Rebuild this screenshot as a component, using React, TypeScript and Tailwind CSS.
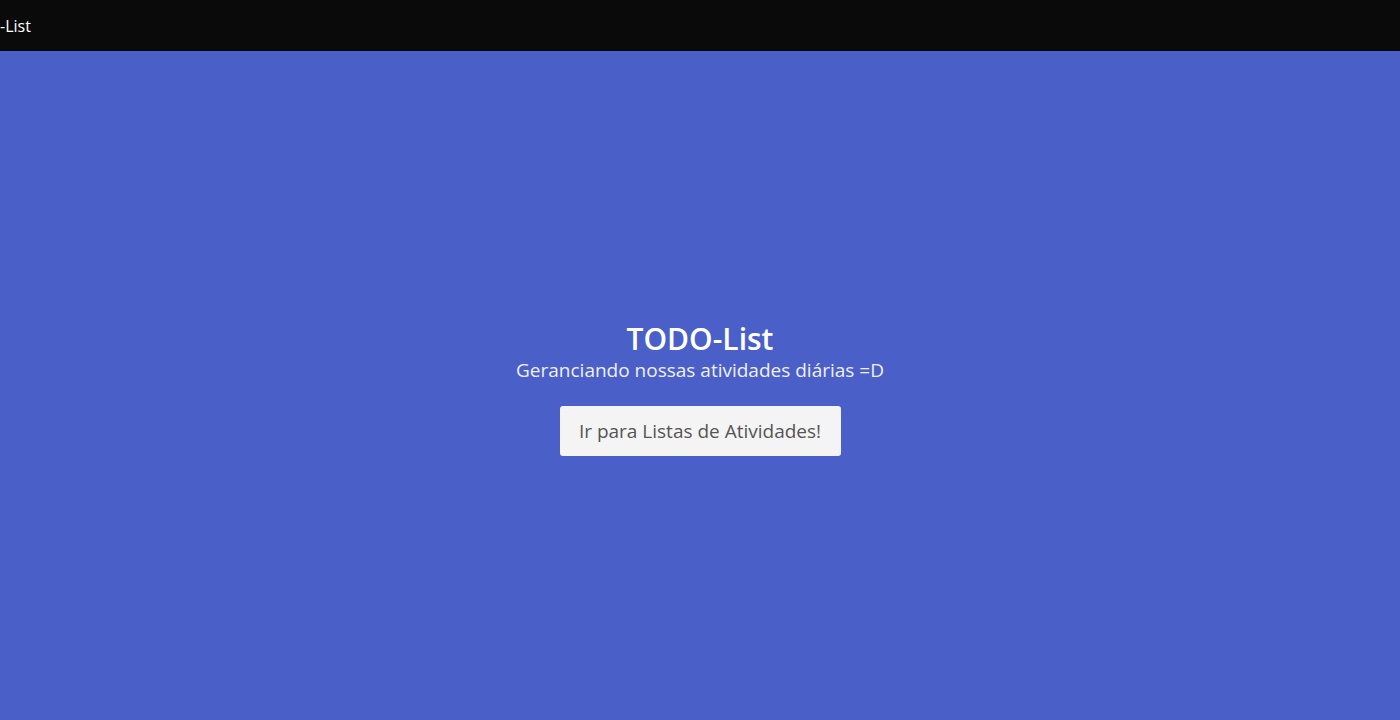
export default function App() {
  return (
    <div className="flex h-[720px] w-full flex-col bg-[#4a5fc8] font-['Open_Sans',sans-serif]">
      <nav className="flex h-[51px] shrink-0 items-center bg-[#0a0a0a]">
        <span className="text-[16px] text-white">-List</span>
      </nav>
      <main className="flex flex-1 flex-col items-center justify-center pt-[6px] text-white">
        <h1 className="text-[30px] font-semibold leading-[36px]">TODO-List</h1>
        <p className="text-[19px] leading-[26px] text-[#f0f0f8]">Geranciando nossas atividades diárias =D</p>
        <button className="mt-[23px] h-[50px] w-[281px] rounded-[3px] bg-[#f4f4f4] text-[19px] text-[#555555]">
          Ir para Listas de Atividades!
        </button>
      </main>
    </div>
  );
}
